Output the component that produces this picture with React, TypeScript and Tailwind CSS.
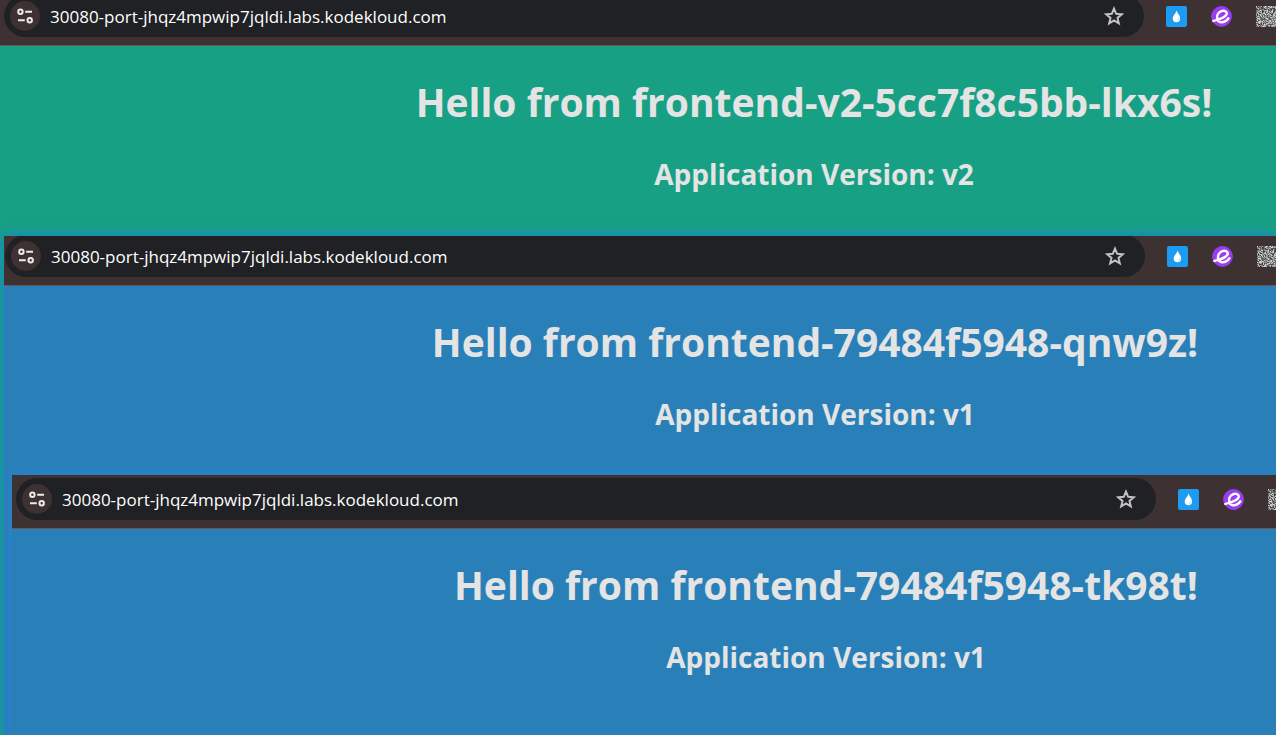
import React from "react";

function TuneIcon() {
  return (
    <svg width="16" height="16" viewBox="0 0 16 16" fill="none" stroke="#efeaea" strokeWidth="2" aria-hidden="true">
      <circle cx="3.4" cy="3.8" r="2.2" />
      <path d="M8.2 3.800h6.800M1 12.200h6.800" />
      <circle cx="12.7" cy="12.2" r="2.2" />
    </svg>
  );
}

function StarIcon() {
  return (
    <svg width="20" height="20" viewBox="0 0 20 20" fill="none" stroke="#c2c2c2" strokeWidth="2" aria-hidden="true">
      <path d="M10 2.600l2.200 5.200 5.500.5-4.200 3.600 1.300 5.400L10 14.400l-4.800 2.900 1.300-5.400-4.200-3.600 5.500-.5z" />
    </svg>
  );
}

function DropIcon() {
  return (
    <svg width="21" height="21" viewBox="0 0 21 21" aria-hidden="true">
      <rect width="21" height="21" rx="2" fill="#1b9cf2" />
      <path d="M10.600 4.500c.6 2.600 3.500 4.800 3.500 8a3.700 3.700 0 0 1-7.400 0c0-3 3.300-5 3.900-8z" fill="#fff" />
      <path d="M12.700 12c.1 1.600-.5 2.500-1.500 3" stroke="#9bd2f8" strokeWidth=".8" fill="none" />
    </svg>
  );
}

function SwirlIcon() {
  return (
    <svg width="21" height="21" viewBox="0 0 21 21" aria-hidden="true">
      <circle cx="10.500" cy="10.500" r="10.400" fill="#9a3cf0" />
      <path
        d="M2.400 14.900C5.500 14.200 15.800 11.300 15.800 7.600c0-2.500-2.800-3.500-5.400-2.500C7 6.400 5.500 9.900 6.200 12.900c.8 3.500 4.700 4.200 7.800 2.500 1.500-.8 2.600-1.900 3.300-3.100"
        fill="none"
        stroke="#fff"
        strokeWidth="2.500"
        strokeLinecap="round"
      />
    </svg>
  );
}

const CELLS = Array.from({ length: 441 }, (_, i) => {
  const n = Math.sin((i + 1) * 12.9898) * 43758.5453;
  return 50 + Math.floor((n - Math.floor(n)) * 170);
});

function CodeIcon() {
  return (
    <svg width="21" height="21" viewBox="0 0 21 21" shapeRendering="crispEdges" aria-hidden="true">
      {CELLS.map((v, i) => (
        <rect key={i} x={i % 21} y={Math.floor(i / 21)} width="1" height="1" fill={`rgb(${v},${v},${v})`} />
      ))}
    </svg>
  );
}

type BarProps = { className: string; row: string; tools: string };

function AddressBar({ className, row, tools }: BarProps) {
  return (
    <header className={`overflow-hidden border-b border-[#655858] bg-[#3d3131] ${className}`}>
      <div className={`flex h-[42px] ${row}`}>
        <div className="flex min-w-0 flex-1 items-center rounded-full bg-[#202124] pr-5 pl-[6px]">
          <button type="button" aria-label="Site information" className="flex size-[30px] shrink-0 items-center justify-center rounded-full bg-[#3d3131]">
            <TuneIcon />
          </button>
          <input
            type="text"
            aria-label="Address"
            defaultValue="30080-port-jhqz4mpwip7jqldi.labs.kodekloud.com"
            className="ml-[10px] h-8 min-w-0 flex-1 bg-transparent text-[17px] text-white outline-none"
          />
          <button type="button" aria-label="Bookmark this page" className="shrink-0">
            <StarIcon />
          </button>
        </div>
        <div className={`flex shrink-0 items-center gap-6 overflow-hidden pl-[22px] ${tools}`}>
          <button type="button" aria-label="Drop extension" className="shrink-0"><DropIcon /></button>
          <button type="button" aria-label="Swirl extension" className="shrink-0"><SwirlIcon /></button>
          <button type="button" aria-label="Code extension" className="shrink-0"><CodeIcon /></button>
        </div>
      </div>
    </header>
  );
}

function Message({ pod, version, className }: { pod: string; version: string; className: string }) {
  return (
    <div className={`flex flex-col items-center gap-6 font-bold whitespace-nowrap text-[#e4e4e4] ${className}`}>
      <h1 className="text-[39px] leading-[56px]">{pod}</h1>
      <h2 className="text-[28px] leading-10">{version}</h2>
    </div>
  );
}

export default function App() {
  return (
    <main className="flex min-h-screen flex-col overflow-hidden bg-[#18a085] font-['Segoe_UI','Open_Sans',sans-serif]">
      <section className="h-[236px] shrink-0">
        <AddressBar className="h-[46px]" row="-mt-[5px] ml-1" tools="w-[132px]" />
        <Message pod="Hello from frontend-v2-5cc7f8c5bb-lkx6s!" version="Application Version: v2" className="pt-7 pl-[352px]" />
      </section>
      <div className="ml-1 flex flex-1 flex-col bg-[#2980b9] shadow-[0_0_12px_#1c7ed6]">
        <section className="h-[239px] shrink-0">
          <AddressBar className="h-[50px]" row="-mt-px ml-px" tools="w-[131px]" />
          <Message pod="Hello from frontend-79484f5948-qnw9z!" version="Application Version: v1" className="pt-7 pl-[350px]" />
        </section>
        <section className="ml-2 flex-1 bg-[#2980b9] shadow-[0_0_10px_#2a7fd8]">
          <AddressBar className="h-[54px]" row="mt-[3px] ml-1" tools="w-[120px]" />
          <Message pod="Hello from frontend-79484f5948-tk98t!" version="Application Version: v1" className="pt-7 pl-[364px]" />
        </section>
      </div>
    </main>
  );
}
